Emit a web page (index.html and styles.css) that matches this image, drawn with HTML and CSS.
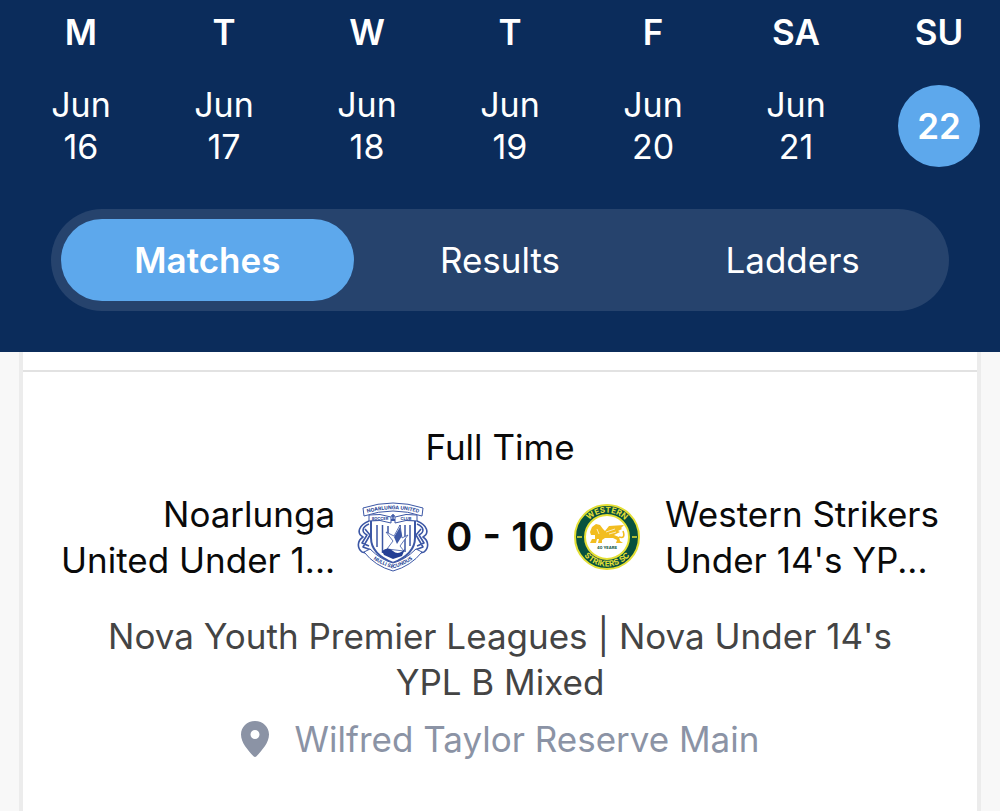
FILE: index.html
```html
<!DOCTYPE html>
<html lang="en">
<head>
    <meta charset="UTF-8">
    <meta name="viewport" content="width=device-width, initial-scale=1.0">
    <title>Matches</title>
    <link rel="stylesheet" href="styles.css">
</head>
<body>
    <header class="header">
        <div class="week">
            <button class="day"><span class="day-name">M</span><span class="date">Jun<br>16</span></button>
            <button class="day"><span class="day-name">T</span><span class="date">Jun<br>17</span></button>
            <button class="day"><span class="day-name">W</span><span class="date">Jun<br>18</span></button>
            <button class="day"><span class="day-name">T</span><span class="date">Jun<br>19</span></button>
            <button class="day"><span class="day-name">F</span><span class="date">Jun<br>20</span></button>
            <button class="day"><span class="day-name">SA</span><span class="date">Jun<br>21</span></button>
            <button class="day selected"><span class="day-name">SU</span><span class="date">22</span></button>
        </div>

        <nav class="tabs">
            <button class="tab active">Matches</button>
            <button class="tab">Results</button>
            <button class="tab">Ladders</button>
        </nav>
    </header>

    <main class="card">
        <section class="match">
            <p class="status">Full Time</p>
            <div class="teams">
                <p class="team home">Noarlunga<br>United Under 1...</p>
                <!-- Noarlunga United crest -->
                <svg class="logo" viewBox="0 0 72 72" role="img" aria-label="Noarlunga United">
                    <defs>
                        <path id="home-top" d="M5 13.500Q36 3 67 13.500"/>
                        <path id="home-bottom" d="M9 52Q20 63 36 67.500Q52 63 63 52"/>
                    </defs>
                    <g fill="#fff" stroke="#3c57a5" stroke-width="1.600" stroke-linejoin="round">
                        <path d="M12 20C2 24-1 32 6 36C0 40 0 47 5 51L13 53M60 20C70 24 73 32 66 36C72 40 72 47 67 51L59 53"/>
                        <path d="M12 23C5 26 4 31 10 34L5 42L12 45M60 23C67 26 68 31 62 34L67 42L60 45M8 28l5 6-7 12 8 3M64 28l-5 6 7 12-8 3"/>
                        <path d="M14 19H58V37C58 49 48 57 36 62C24 57 14 49 14 37Z" stroke-width="2"/>
                        <path d="M6 7Q36-3 66 7L65 15Q36 5 7 15Z" stroke-width="1"/>
                        <path d="M12 14Q23 12 34 16V22Q23 18 12 20ZM60 14Q49 12 38 16V22Q49 18 60 20Z" stroke-width="1"/>
                        <path d="M7 51L13 48Q24 59 36 62Q48 59 59 48L65 51Q54 65 36 70Q18 65 7 51Z" stroke-width="1"/>
                    </g>
                    <path d="M20 24V46M25.500 24V52M31 25V32M43 24V32M48 24V51M53 24V45" stroke="#3c57a5" stroke-width="1.500"/>
                    <path d="M30 48L36 40L29 31L37 35L43 24L45 37L51 34L43 45L47 50Z" fill="#fff" stroke="#3c57a5" stroke-width=".800"/>
                    <path d="M43 26L45 35L40 43L37 36Z" fill="#3c57a5"/>
                    <path d="M25 50q6-5 11 0t12-2l-3 7-9 3-9-4Z" fill="#243f94"/>
                    <path d="M36 13v5M34 15h4" stroke="#3c57a5" stroke-width="1.500"/>
                    <text class="home-text"><textPath href="#home-top" startOffset="50%">NOARLUNGA UNITED</textPath></text>
                    <text class="home-small" x="23" y="19">SOCCER</text>
                    <text class="home-small" x="49" y="19">CLUB</text>
                    <text class="home-text"><textPath href="#home-bottom" startOffset="50%">NULLI SECUNDUS</textPath></text>
                </svg>
                <strong class="score">0 - 10</strong>
                <!-- Western Strikers badge -->
                <svg class="logo" viewBox="0 0 72 72" role="img" aria-label="Western Strikers">
                    <defs>
                        <path id="away-top" d="M11.500 36A24.500 24.500 0 0 1 60.500 36"/>
                        <path id="away-bottom" d="M6.500 36A29.500 29.500 0 0 0 65.500 36"/>
                    </defs>
                    <circle cx="36" cy="36" r="32" fill="#07513e" stroke="#e4df35" stroke-width="2"/>
                    <circle cx="36" cy="36" r="22" fill="#fff" stroke="#e4df35" stroke-width="2"/>
                    <path d="M6 36h5M61 36h5" stroke="#e4df35" stroke-width="1.500"/>
                    <path d="M19 42L21 38L24 38L24 34L20 34L19 31L21 26L25 23L29 24L32 28L34 30L38 25L53 24L50 27L51 28L47 30L49 31L43 34L48 36L49 40L52 42H45L46 39L42 37H34L31 39L31 42H27L28 38L26 38L25 42Z" fill="#f2bd20"/>
                    <path d="M48 36Q55 38 52 30" fill="none" stroke="#f2bd20" stroke-width="1.500"/>
                    <path d="M35 31L44 28M38 33L45 31M26 28l2 5" stroke="#fff" stroke-width=".700"/>
                    <text class="years" x="36" y="48">40 YEARS</text>
                    <text class="away-text"><textPath href="#away-top" startOffset="50%">WESTERN</textPath></text>
                    <text class="away-text"><textPath href="#away-bottom" startOffset="50%">STRIKERS SC</textPath></text>
                </svg>
                <p class="team away">Western Strikers<br>Under 14's YP...</p>
            </div>
            <p class="league">Nova Youth Premier Leagues | Nova Under 14's YPL B Mixed</p>
            <p class="venue">
                <svg class="pin" viewBox="0 0 28 36" aria-hidden="true">
                    <path fill-rule="evenodd" d="M14 0C6 0 0 6 0 13.500C0 22 7 29 12.500 35.300Q14 36.700 15.500 35.300C21 29 28 22 28 13.500C28 6 22 0 14 0ZM14 9A4.500 4.500 0 1 1 14 18A4.500 4.500 0 1 1 14 9Z"/>
                </svg>
                Wilfred Taylor Reserve Main
            </p>
        </section>
    </main>
</body>
</html>
```
FILE: styles.css
```css
* {
    box-sizing: border-box;
}
body {
    margin: 0;
    min-height: 100vh;
    display: flex;
    flex-direction: column;
    background: #f8f8f8;
    color: #0a0a0a;
    font-family: Inter, "Liberation Sans", sans-serif;
    font-size: 35px;
    line-height: 46px;
}
p {
    margin: 0;
}
button {
    padding: 0;
    border: none;
    background: none;
    color: white;
    font: inherit;
    cursor: pointer;
}

/* Header */
.header {
    background: #0b2c5b;
    padding: 9px 0 41px;
}
.week {
    display: flex;
    justify-content: space-between;
    padding: 0 20px 0 40px;
}
.day {
    width: 82px;
}
.day-name {
    display: block;
    font-weight: 600;
    margin-bottom: 30px;
}
.date {
    display: flex;
    align-items: center;
    justify-content: center;
    height: 82px;
    border-radius: 50%;
    font-size: 34px;
    line-height: 42px;
}
.selected .date {
    background: #5da8ec;
    font-size: 35px;
    font-weight: 600;
}

/* Tabs */
.tabs {
    display: flex;
    margin: 42px 51px 0;
    padding: 10px;
    border-radius: 51px;
    background: #26436d;
}
.tab {
    flex: 1;
    height: 82px;
    border-radius: 41px;
}
.tab.active {
    background: #5da8ec;
    font-weight: 600;
}

/* Match card */
.card {
    flex: 1;
    margin: 0 19px;
    padding-top: 18px;
    background: white;
    border: solid #ececec;
    border-width: 0 4px;
}
.match {
    padding: 52px 38px 48px;
    border-top: 2px solid #e2e2e2;
    text-align: center;
}
.teams {
    display: grid;
    grid-template-columns: 1fr 72px 108px 72px 1fr;
    column-gap: 17px;
    align-items: center;
    margin-top: 21px;
}
.team {
    white-space: nowrap;
}
.home {
    text-align: right;
    padding-right: 5px;
}
.away {
    text-align: left;
    padding-left: 5px;
}
.logo {
    display: block;
    width: 72px;
    height: 72px;
}
.score {
    font-size: 40px;
    font-weight: 600;
    white-space: nowrap;
}
.home-text,
.home-small,
.years,
.away-text {
    font-weight: 700;
    text-anchor: middle;
}
.home-text {
    font-size: 5px;
    fill: #243f94;
}
.home-small {
    font-size: 4px;
    fill: #243f94;
}
.years {
    font-size: 4px;
    fill: #07513e;
}
.away-text {
    font-size: 8px;
    fill: #e4df35;
}
.league {
    margin-top: 30px;
    padding: 0 38px;
    color: #444;
}
.venue {
    display: flex;
    align-items: center;
    justify-content: center;
    gap: 26px;
    margin-top: 11px;
    color: #8b93a5;
}
.pin {
    width: 28px;
    height: 36px;
    fill: #8b93a5;
}
```
